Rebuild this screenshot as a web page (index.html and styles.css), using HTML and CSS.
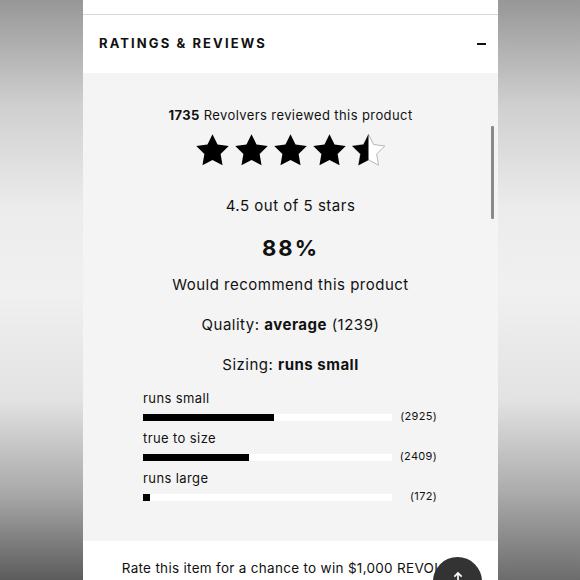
FILE: index.html
```html
<!DOCTYPE html>
<html>
<head>
<meta charset="utf-8">
<link rel="stylesheet" href="styles.css">
</head>
<body>
<div class="page">
  <div class="side side-left"></div>
  <div class="panel">
    <div class="topstrip"></div>
    <div class="header">
      <h2 class="title">RATINGS &amp; REVIEWS</h2>
      <span class="minus"></span>
    </div>
    <div class="content">
      <p class="count-line"><b>1735</b> Revolvers reviewed this product</p>
      <div class="stars">
        <svg class="star" viewBox="0 0 24 24"><path d="M12 2l3.09 6.26L22 9.27l-5 4.87 1.18 6.88L12 17.77l-6.18 3.25L7 14.14 2 9.27l6.91-1.01L12 2z"/></svg>
        <svg class="star" viewBox="0 0 24 24"><path d="M12 2l3.09 6.26L22 9.27l-5 4.87 1.18 6.88L12 17.77l-6.18 3.25L7 14.14 2 9.27l6.91-1.01L12 2z"/></svg>
        <svg class="star" viewBox="0 0 24 24"><path d="M12 2l3.09 6.26L22 9.27l-5 4.87 1.18 6.88L12 17.77l-6.18 3.25L7 14.14 2 9.27l6.91-1.01L12 2z"/></svg>
        <svg class="star" viewBox="0 0 24 24"><path d="M12 2l3.09 6.26L22 9.27l-5 4.87 1.18 6.88L12 17.77l-6.18 3.25L7 14.14 2 9.27l6.91-1.01L12 2z"/></svg>
        <svg class="star" viewBox="0 0 24 24">
          <defs><clipPath id="half"><rect x="0" y="0" width="12" height="24"/></clipPath></defs>
          <path class="outline" d="M12 2l3.09 6.26L22 9.27l-5 4.87 1.18 6.88L12 17.77l-6.18 3.25L7 14.14 2 9.27l6.91-1.01L12 2z"/>
          <path clip-path="url(#half)" d="M12 2l3.09 6.26L22 9.27l-5 4.87 1.18 6.88L12 17.77l-6.18 3.25L7 14.14 2 9.27l6.91-1.01L12 2z"/>
        </svg>
      </div>
      <p class="line avg">4.5 out of 5 stars</p>
      <p class="pct">88%</p>
      <p class="line rec">Would recommend this product</p>
      <p class="line quality">Quality: <b>average</b> (1239)</p>
      <p class="line sizing">Sizing: <b>runs small</b></p>
      <div class="bars">
        <div class="bar-row">
          <span class="bar-label">runs small</span>
          <div class="bar"><div class="fill" style="width:52.6%"></div></div>
          <span class="bar-count">(2925)</span>
        </div>
        <div class="bar-row">
          <span class="bar-label">true to size</span>
          <div class="bar"><div class="fill" style="width:42.6%"></div></div>
          <span class="bar-count">(2409)</span>
        </div>
        <div class="bar-row">
          <span class="bar-label">runs large</span>
          <div class="bar"><div class="fill" style="width:2.8%"></div></div>
          <span class="bar-count">(172)</span>
        </div>
      </div>
      <div class="scrollbar"></div>
    </div>
    <div class="footer">
      <p class="rate">Rate this item for a chance to win $1,000 REVOLVE</p>
    </div>
    <button class="to-top" aria-label="Back to top">
      <svg viewBox="0 0 24 24"><path d="M12 19V6M6.5 11.5L12 6l5.5 5.5"/></svg>
    </button>
  </div>
  <div class="side side-right"></div>
</div>
</body>
</html>
```

FILE: styles.css
```css
* { box-sizing: border-box; }
html, body { margin: 0; padding: 0; }
body {
  font-family: Inter, "Open Sans", "Liberation Sans", sans-serif;
  color: #111;
  background: #eee;
}
.page {
  display: flex;
  width: 580px;
  height: 580px;
  overflow: hidden;
}
.side {
  height: 580px;
  background: linear-gradient(to bottom, #979797 0%, #cfcfcf 18%, #ececec 36%, #f0f0f0 50%, #e2e2e2 69%, #a9a9a9 85%, #5c5c5c 100%);
}
.side-left { width: 83px; }
.side-right {
  flex: 1;
  background: linear-gradient(to bottom, #979797 0%, #cfcfcf 18%, #ececec 36%, #f0f0f0 50%, #e2e2e2 69%, #ababab 85%, #6c6c6c 100%);
}
.panel {
  position: relative;
  width: 415px;
  height: 580px;
  display: flex;
  flex-direction: column;
  background: #fff;
}
.topstrip {
  height: 15px;
  border-bottom: 1px solid #d8d8d8;
}
.header {
  height: 58px;
  display: flex;
  align-items: center;
  justify-content: space-between;
  padding: 0 12px 2px 16px;
}
.title {
  margin: 0;
  font-size: 13px;
  font-weight: 700;
  letter-spacing: 2.1px;
  line-height: 16px;
}
.minus {
  width: 9px;
  height: 2px;
  background: #111;
  margin-top: 1px;
}
.content {
  position: relative;
  height: 468px;
  background: #f4f4f4;
  padding-top: 32px;
  text-align: center;
}
p { margin: 0; }
.count-line {
  font-size: 13px;
  line-height: 20px;
  letter-spacing: 0.4px;
}
.count-line b { font-weight: 700; }
.stars {
  margin-top: 6px;
  height: 39px;
  display: flex;
  justify-content: center;
}
.star {
  width: 39px;
  height: 39px;
  fill: #000;
}
.star .outline {
  fill: #fff;
  stroke: #888;
  stroke-width: 0.35;
}
.line {
  font-size: 15px;
  line-height: 20px;
  letter-spacing: 0.5px;
}
.line b { font-weight: 700; }
.avg { margin-top: 26px; }
.pct {
  margin-top: 18px;
  font-size: 22px;
  font-weight: 700;
  line-height: 28px;
  letter-spacing: 2px;
}
.rec { margin-top: 13px; }
.quality { margin-top: 20px; }
.sizing { margin-top: 20px; }
.bars {
  margin: 14px 61px 0 60px;
  display: flex;
  flex-direction: column;
  gap: 8px;
  text-align: left;
}
.bar-row {
  display: grid;
  grid-template-columns: 249px 1fr;
  row-gap: 7px;
  align-items: center;
}
.bar-label {
  grid-column: 1 / 3;
  font-size: 13px;
  line-height: 18px;
  letter-spacing: 0.4px;
}
.bar {
  height: 7px;
  background: #fff;
}
.fill {
  height: 7px;
  background: #000;
}
.bar-count {
  font-size: 11px;
  line-height: 7px;
  text-align: right;
  letter-spacing: 0.3px;
  margin-top: -3px;
}
.scrollbar {
  position: absolute;
  left: 408px;
  top: 53px;
  width: 3px;
  height: 93px;
  background: #8a8a8a;
  border-radius: 1px;
}
.footer {
  flex: 1;
  background: #fff;
  padding-top: 17px;
  text-align: center;
}
.rate {
  font-size: 13.5px;
  line-height: 20px;
  letter-spacing: 0.3px;
}
.to-top {
  position: absolute;
  left: 350px;
  top: 557px;
  width: 49px;
  height: 49px;
  border: 0;
  padding: 0;
  border-radius: 50%;
  background: #333;
  display: flex;
  justify-content: center;
  padding-top: 12px;
}
.to-top svg {
  width: 16px;
  height: 16px;
  fill: none;
  stroke: #fff;
  stroke-width: 2.5;
}
```
